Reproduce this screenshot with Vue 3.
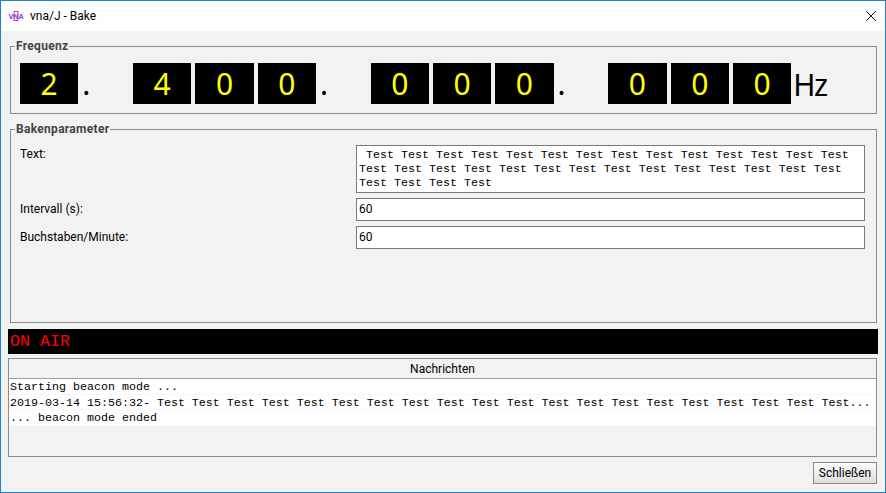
<template>
  <div class="window">
    <div class="titlebar">
      <svg class="app-icon" width="16" height="16" viewBox="0 0 16 16">
        <rect x="6" y="3.5" width="4" height="9" fill="#fff" stroke="#f0308c" stroke-width="1" />
        <text x="8" y="10.5" text-anchor="middle" textLength="15" lengthAdjust="spacingAndGlyphs" class="icon-text">VNA</text>
      </svg>
      <span class="title">vna/J - Bake</span>
      <svg class="close" width="10" height="10" viewBox="0 0 10 10">
        <path d="M0 0 L10 10 M10 0 L0 10" stroke="#111" stroke-width="1" fill="none" />
      </svg>
    </div>

    <div class="content">
      <fieldset class="group freq">
        <legend>Frequenz</legend>
        <div class="digits">
          <template v-for="(group, i) in groups" :key="i">
            <div class="digit-group">
              <div v-for="(d, j) in group" :key="j" class="digit">{{ d }}</div>
            </div>
            <span v-if="i < groups.length - 1" class="dot">.</span>
          </template>
          <span class="hz">Hz</span>
        </div>
      </fieldset>

      <fieldset class="group params">
        <legend>Bakenparameter</legend>
        <div class="form">
          <label class="top">Text:</label>
          <div class="textbox">{{ beaconText }}</div>
          <label class="mid">Intervall (s):</label>
          <input type="text" value="60" readonly>
          <label class="mid">Buchstaben/Minute:</label>
          <input type="text" value="60" readonly>
        </div>
      </fieldset>

      <div class="status">ON AIR</div>

      <div class="messages">
        <div class="msg-head">Nachrichten</div>
        <div v-for="(m, i) in messages" :key="i" class="msg-row">{{ m }}</div>
      </div>

      <div class="footer">
        <button type="button">Schließen</button>
      </div>
    </div>
  </div>
</template>

<script setup>
const groups = [['2'], ['4', '0', '0'], ['0', '0', '0'], ['0', '0', '0']]

const beaconText = [
  ' ' + Array(14).fill('Test').join(' '),
  Array(14).fill('Test').join(' '),
  Array(4).fill('Test').join(' ')
].join('\n')

const messages = [
  'Starting beacon mode ...',
  '2019-03-14 15:56:32- ' + Array(20).fill('Test').join(' ') + '...',
  '... beacon mode ended'
]
</script>

<style>
html, body {
  margin: 0;
  background: #f2f2f2;
}
</style>

<style scoped>
.window {
  width: 886px;
  height: 493px;
  box-sizing: border-box;
  border: 1px solid #1883d7;
  background: #f2f2f2;
  display: flex;
  flex-direction: column;
  font-family: Roboto, sans-serif;
  font-size: 12px;
  color: #000;
  overflow: hidden;
}

.titlebar {
  height: 30px;
  flex: none;
  background: #fff;
  display: flex;
  align-items: center;
  padding: 0 9px 0 7px;
}

.app-icon {
  margin-right: 6px;
}

.icon-text {
  font-family: "DejaVu Sans", sans-serif;
  font-size: 7px;
  font-weight: 700;
  fill: #8a4be8;
}

.title {
  flex: 1;
}

.content {
  flex: 1;
  padding: 7px 7px 0;
  display: flex;
  flex-direction: column;
}

.group {
  margin: 0 1px 0 2px;
  padding: 0;
  border: 1px solid #8c8c8c;
  min-width: 0;
  box-sizing: border-box;
}

.group legend {
  margin-left: 4px;
  padding: 0 1px;
  font-weight: 700;
  letter-spacing: 0.3px;
  color: #444;
  line-height: 16px;
}

.freq {
  height: 76px;
}

.digits {
  display: flex;
  align-items: flex-start;
  padding: 9px 0 0 9px;
}

.digit-group {
  display: flex;
  gap: 4px;
}

.digit {
  width: 58.33px;
  height: 41px;
  background: #000;
  color: #ff0;
  font-family: "Noto Sans", sans-serif;
  font-size: 30px;
  line-height: 41px;
  text-align: center;
}

.dot {
  width: 54.67px;
  padding-left: 4px;
  box-sizing: border-box;
  font-family: "Noto Sans", sans-serif;
  font-size: 30px;
  line-height: 42px;
}

.hz {
  margin-left: 2px;
  font-family: "Noto Sans", sans-serif;
  font-size: 30px;
  letter-spacing: -1.5px;
  line-height: 44px;
}

.params {
  margin-top: 7px;
  height: 202px;
}

.form {
  display: grid;
  grid-template-columns: 336px 1fr;
  row-gap: 5px;
  padding: 8px 11px 0 9px;
}

.form label {
  line-height: 14px;
}

.form label.top {
  padding-top: 2px;
}

.form label.mid {
  align-self: center;
  margin-top: -2px;
}

.textbox {
  height: 48px;
  box-sizing: border-box;
  border: 1px solid #7a7a7a;
  background: #fff;
  padding: 2px 0 0 2px;
  font-family: "Liberation Mono", monospace;
  font-size: 11.67px;
  line-height: 14px;
  white-space: pre;
  overflow: hidden;
}

.form input {
  height: 23px;
  box-sizing: border-box;
  border: 1px solid #7a7a7a;
  background: #fff;
  padding: 0 2px 2px;
  margin: 0;
  font-family: Roboto, sans-serif;
  font-size: 12px;
  color: #000;
  outline: none;
}

.status {
  margin-top: 6px;
  height: 25px;
  flex: none;
  background: #000;
  color: #f00;
  padding-left: 2px;
  font-family: "Liberation Mono", monospace;
  font-size: 16.67px;
  line-height: 25px;
}

.messages {
  margin: 4px 1px 0 0;
  height: 99px;
  box-sizing: border-box;
  flex: none;
  border: 1px solid #8c8c8c;
}

.msg-head {
  height: 20px;
  box-sizing: border-box;
  border-bottom: 1px solid #a0a0a0;
  text-align: center;
  line-height: 20px;
}

.msg-row {
  height: 15.67px;
  box-sizing: border-box;
  padding-left: 1px;
  background: #fff;
  border-bottom: 1px solid #f6f6f6;
  font-family: "Liberation Mono", monospace;
  font-size: 11.67px;
  line-height: 16px;
  white-space: pre;
  overflow: hidden;
}

.footer {
  display: flex;
  justify-content: flex-end;
  margin: 5px 1px 0 0;
}

.footer button {
  width: 64px;
  height: 22px;
  padding: 0;
  border: 1px solid #8a8a8a;
  background: linear-gradient(#fbfbfb, #dedede);
  font-family: Roboto, sans-serif;
  font-size: 12px;
  color: #000;
}
</style>
